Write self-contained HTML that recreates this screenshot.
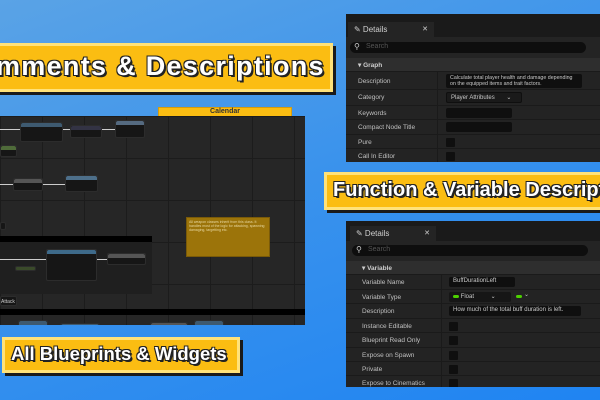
<!DOCTYPE html>
<html><head><meta charset="utf-8"><style>
*{margin:0;padding:0;box-sizing:border-box}
html,body{width:600px;height:400px;overflow:hidden}
body{position:relative;font-family:"Liberation Sans",sans-serif;
background:linear-gradient(160deg,#5aa3e6 0%,#3b93ec 45%,#1f84f2 100%)}
.abs{position:absolute}
.banner{position:absolute;background:#fbbd12;border:3px solid #ffe27a;box-shadow:3px 3px 0 #1a1a1a}
.bt{position:absolute;font-family:"Liberation Sans",sans-serif;font-weight:bold;color:#fff;white-space:nowrap;
text-shadow:-1px -1px 0 #222,1px -1px 0 #222,-1px 1px 0 #222,1px 1px 0 #222,2px 2px 0 #222}
.graph{position:absolute;left:0;top:116px;width:305px;height:209px;background-color:#262626;
background-image:linear-gradient(#1c1c1c 1px,transparent 1px),linear-gradient(90deg,#1c1c1c 1px,transparent 1px);
background-size:42px 42px;overflow:hidden}
.node{position:absolute;background:#161616;border-radius:2px;border:1px solid #2c2c2c}
.node i{display:block;height:4px;background:#3e5a70;border-radius:2px 2px 0 0}
.panel{position:absolute;left:346px;width:254px;background:#1a1a1a;overflow:hidden;font-size:6.5px;color:#c0c0c0}
.tab{position:absolute;left:2px;width:86px;height:15px;background:#242424;color:#d0d0d0;font-size:8px;padding:3px 0 0 6px}
.tab b{position:absolute;right:6px;top:3px;font-weight:normal;font-size:7px}
.search{position:absolute;left:4px;width:236px;height:11px;border-radius:6px;background:#0e0e0e;color:#555;font-size:7px;padding:1px 0 0 16px}
.sec{position:absolute;left:0;width:254px;height:13px;background:#2e2e2e;color:#cfcfcf;font-weight:bold;font-size:6.5px;padding:3px 0 0 12px}
.row{position:absolute;left:0;width:254px;background:#232323;border-top:1px solid #1a1a1a}
.row span{position:absolute;left:12px;top:4px}
.row .lab{position:absolute;left:0;top:0;bottom:0;width:92px;border-right:1px solid #1a1a1a}
.box{position:absolute;background:#0f0f0f;border-radius:2px;color:#c8c8c8;font-size:6px;padding:1px 4px;overflow:hidden}
.cb{position:absolute;width:9px;height:9px;background:#0f0f0f;border-radius:1px}
.clip{position:absolute;left:0;top:0;width:600px;height:400px;overflow:hidden}
</style></head><body><div class="clip">
<div class="banner" style="left:-6px;top:43px;width:339px;height:49px"></div>
<div class="bt" style="left:-4px;top:51px;font-size:27px;letter-spacing:1.3px">mments &amp; Descriptions</div>

<div class="abs" style="left:158px;top:107px;width:134px;height:12px;background:#fbbd12;border:1px solid #d49c10;color:#333;font-size:7px;text-align:center;font-weight:bold">Calendar</div>

<div class="graph">
 <div class="abs" style="left:0;top:13px;width:118px;height:1px;background:#ccc"></div>
 <div class="node" style="left:20px;top:6px;width:43px;height:20px"><i></i></div>
 <div class="node" style="left:70px;top:9px;width:32px;height:13px"><i style="background:#334"></i></div>
 <div class="node" style="left:115px;top:4px;width:30px;height:18px"><i style="background:#556a80"></i></div>
 <div class="node" style="left:0;top:29px;width:17px;height:12px"><i style="background:#4f6b3a"></i></div>
 <div class="abs" style="left:0;top:68px;width:65px;height:1px;background:#ccc"></div>
 <div class="node" style="left:13px;top:62px;width:30px;height:13px"><i style="background:#555"></i></div>
 <div class="node" style="left:65px;top:59px;width:33px;height:17px"><i style="background:#4d6f8a"></i></div>
 <div class="node" style="left:0;top:106px;width:6px;height:8px"></div>
 <div class="abs" style="left:0;top:120px;width:152px;height:6px;background:#000"></div>
 <div class="abs" style="left:0;top:126px;width:152px;height:52px;background:#1f1f1f"></div>
 <div class="abs" style="left:0;top:143px;width:110px;height:1px;background:#ccc"></div>
 <div class="node" style="left:46px;top:133px;width:51px;height:32px"><i style="background:#3e6a8a"></i></div>
 <div class="node" style="left:107px;top:137px;width:39px;height:12px"><i style="background:#555"></i></div>
 <div class="node" style="left:15px;top:150px;width:21px;height:5px;background:#3a4a2a"></div>
 <div class="abs" style="left:186px;top:101px;width:84px;height:40px;background:#9c740a;border:1px solid #7a5a08;color:#e8d8a0;font-size:3.5px;padding:2px">All weapon classes inherit from this class. It handles most of the logic for attacking, spawning damaging, targetting etc.</div>
 <div class="node" style="left:0;top:180px;width:17px;height:10px;color:#ccc;font-size:5px;padding:2px 0 0 0">Attack</div>
 <div class="abs" style="left:0;top:193px;width:305px;height:6px;background:#000"></div>
 <div class="node" style="left:18px;top:204px;width:30px;height:6px"><i></i></div>
 <div class="node" style="left:60px;top:207px;width:40px;height:4px"><i></i></div>
 <div class="node" style="left:150px;top:206px;width:38px;height:4px"><i style="background:#555"></i></div>
 <div class="node" style="left:194px;top:204px;width:30px;height:6px"><i></i></div>
</div>

<div class="banner" style="left:324px;top:172px;width:290px;height:38px"></div>
<div class="bt" style="left:333px;top:179px;font-size:20px">Function &amp; Variable Descripti</div>

<div class="panel" style="top:14px;height:148px">
 <div class="tab" style="top:8px">✎ Details<b>✕</b></div>
 <div class="abs" style="left:0;top:23px;width:254px;height:125px;background:#242424"></div>
 <div class="search" style="top:28px">Search</div>
 <div class="abs" style="left:8px;top:28px;color:#ccc;font-size:8px">⚲</div>
 <div class="sec" style="top:44px">▾ Graph</div>
 <div class="row" style="top:57px;height:18px"><div class="lab"></div><span style="top:6px">Description</span><div class="box" style="left:100px;top:2px;width:136px;height:14px;font-size:5.3px;line-height:6px">Calculate total player health and damage depending on the equipped items and trait factors.</div></div>
 <div class="row" style="top:75px;height:16px"><div class="lab"></div><span>Category</span><div class="box" style="left:100px;top:2px;width:76px;height:11px;background:#1a1a1a;border:1px solid #0f0f0f">Player Attributes &nbsp;&nbsp;&nbsp;&nbsp;&nbsp; ⌄</div></div>
 <div class="row" style="top:91px;height:14px"><div class="lab"></div><span>Keywords</span><div class="box" style="left:100px;top:2px;width:66px;height:10px"></div></div>
 <div class="row" style="top:105px;height:15px"><div class="lab"></div><span>Compact Node Title</span><div class="box" style="left:100px;top:2px;width:66px;height:10px"></div></div>
 <div class="row" style="top:120px;height:14px"><div class="lab"></div><span>Pure</span><div class="cb" style="left:100px;top:3px"></div></div>
 <div class="row" style="top:134px;height:14px"><div class="lab"></div><span>Call In Editor</span><div class="cb" style="left:100px;top:3px"></div></div>
</div>

<div class="panel" style="top:221px;height:166px">
 <div class="tab" style="top:5px;left:4px">✎ Details<b>✕</b></div>
 <div class="abs" style="left:0;top:20px;width:254px;height:146px;background:#242424"></div>
 <div class="search" style="top:24px;left:6px">Search</div>
 <div class="abs" style="left:10px;top:24px;color:#ccc;font-size:8px">⚲</div>
 <div class="sec" style="top:40px;padding-left:16px">▾ Variable</div>
 <div class="row" style="top:53px;height:15px"><div class="lab" style="width:96px"></div><span style="left:16px">Variable Name</span><div class="box" style="left:103px;top:2px;width:66px;height:10px">BuffDurationLeft</div></div>
 <div class="row" style="top:68px;height:14px"><div class="lab" style="width:96px"></div><span style="left:16px">Variable Type</span><div class="box" style="left:103px;top:2px;width:62px;height:10px;background:#161616"><b style="display:inline-block;width:6px;height:3px;background:#4cd100;border-radius:2px;vertical-align:middle"></b> Float &nbsp;&nbsp;&nbsp;&nbsp;&nbsp;&nbsp;&nbsp;&nbsp;&nbsp;⌄</div><div class="abs" style="left:170px;top:5px;width:6px;height:3px;background:#4cd100;border-radius:2px"></div><div class="abs" style="left:178px;top:1px;font-size:6px">⌄</div></div>
 <div class="row" style="top:82px;height:15px"><div class="lab" style="width:96px"></div><span style="left:16px">Description</span><div class="box" style="left:103px;top:2px;width:132px;height:10px">How much of the total buff duration is left.</div></div>
 <div class="row" style="top:97px;height:14px"><div class="lab" style="width:96px"></div><span style="left:16px">Instance Editable</span><div class="cb" style="left:103px;top:3px"></div></div>
 <div class="row" style="top:111px;height:15px"><div class="lab" style="width:96px"></div><span style="left:16px">Blueprint Read Only</span><div class="cb" style="left:103px;top:3px"></div></div>
 <div class="row" style="top:126px;height:14px"><div class="lab" style="width:96px"></div><span style="left:16px">Expose on Spawn</span><div class="cb" style="left:103px;top:3px"></div></div>
 <div class="row" style="top:140px;height:14px"><div class="lab" style="width:96px"></div><span style="left:16px">Private</span><div class="cb" style="left:103px;top:3px"></div></div>
 <div class="row" style="top:154px;height:14px"><div class="lab" style="width:96px"></div><span style="left:16px">Expose to Cinematics</span><div class="cb" style="left:103px;top:3px"></div></div>
</div>

<div class="banner" style="left:2px;top:337px;width:238px;height:36px"></div>
<div class="bt" style="left:11px;top:343px;font-size:18.5px;letter-spacing:0">All Blueprints &amp; Widgets</div>
</div></body></html>
